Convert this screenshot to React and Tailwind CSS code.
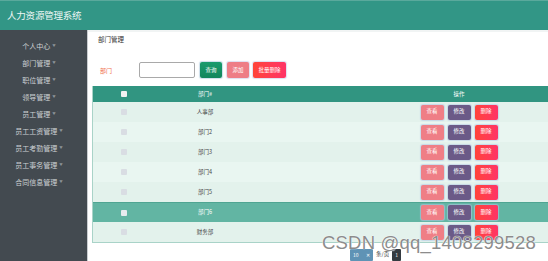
import React from 'react';

// sidebar menu
const menuItems = [
  '个人中心',
  '部门管理',
  '职位管理',
  '领导管理',
  '员工管理',
  '员工工资管理',
  '员工考勤管理',
  '员工事务管理',
  '合同信息管理',
];

const departments = [
  { name: '人事部' },
  { name: '部门2' },
  { name: '部门3' },
  { name: '部门4' },
  { name: '部门5' },
  { name: '部门6', active: true },
  { name: '财务部' },
];

function ActionButton({ label, className }) {
  return (
    <button
      className={`w-[23px] h-[15px] flex items-center justify-center rounded-[2px] text-white text-[5.5px] leading-none shadow-[0_0_1px_1px_rgba(180,200,230,0.6)] ${className}`}
    >
      {label}
    </button>
  );
}

export default function App() {
  return (
    <div
      className="w-[548px] h-[261px] overflow-hidden flex flex-col bg-white relative"
      style={{ fontFamily: '"Noto Sans CJK SC", "Liberation Sans", sans-serif' }}
    >
      {/* header */}
      <header className="h-[30px] shrink-0 bg-[#329686] border-t border-[#5aa99c] flex items-center px-[7px]">
        <span className="text-[#eef7f5] text-[9.5px] tracking-[-0.2px]">人力资源管理系统</span>
      </header>

      <div className="flex flex-1 min-h-0">
        {/* sidebar */}
        <aside className="w-[87px] shrink-0 bg-[#434a50] pt-[8px]">
          <ul className="w-[78px] flex flex-col">
            {menuItems.map((item) => (
              <li key={item} className="h-[17px] flex items-center justify-center">
                <span className="text-[7px] text-[#cdd1d4] leading-none">{item}</span>
                <span className="text-[3.5px] text-[#8e959a] ml-[2px] -mt-[2px]">▼</span>
              </li>
            ))}
          </ul>
        </aside>
        <div className="w-px shrink-0 bg-[#c9cdd0]" />

        {/* main */}
        <main className="flex-1 min-w-0 flex flex-col">
          <div className="h-[2px] bg-[#f1f4f4]" />
          <div className="h-[20px] flex items-center pl-[10px]">
            <span className="text-[6.5px] text-[#333]">部门管理</span>
          </div>

          {/* search form */}
          <div className="mt-[13px] h-[16px] flex items-center pl-[12px]">
            <span className="w-[39px] text-[6px] text-[#f0704f]">部门</span>
            <div className="w-[56px] h-[16px] rounded-[2px] border border-[#a9a9a9] bg-white" />
            <button className="ml-[5px] w-[22px] h-[16px] rounded-[2px] bg-gradient-to-b from-[#1a9b6d] to-[#12865c] text-white text-[5.5px] shadow-[0_0_1px_1px_rgba(170,200,220,0.6)]">查询</button>
            <button className="ml-[5px] w-[22px] h-[16px] rounded-[2px] bg-[#ee7d86] text-white text-[5.5px] shadow-[0_0_1px_1px_rgba(200,200,230,0.6)]">添加</button>
            <button className="ml-[4px] w-[33px] h-[16px] rounded-[2px] bg-gradient-to-r from-[#ff4438] to-[#ff3366] text-white text-[5.5px] shadow-[0_0_1px_1px_rgba(200,200,230,0.6)]">批量删除</button>
          </div>

          {/* table */}
          <div className="mt-[8px] ml-[4px] border-l border-b border-[#a9d3c8]">
            <div className="h-[16px] grid grid-cols-[62px_100px_115px_1fr] items-center bg-[#319581] text-white text-[5.5px]">
              <div className="flex justify-center">
                <span className="w-[6px] h-[6px] bg-[#f2f2f2] rounded-[1px]" />
              </div>
              <div className="text-center">部门#</div>
              <div />
              <div className="text-center">操作</div>
            </div>
            {departments.map((d, i) => (
              <div
                key={d.name}
                className={`h-[20px] grid grid-cols-[62px_100px_115px_1fr] items-center text-[5.5px] ${
                  d.active
                    ? 'bg-[#62b5a3] text-white border-t border-[#4fa592]'
                    : i % 2 === 0
                    ? 'bg-[#e3f2ec] text-[#444]'
                    : 'bg-[#e9f6f1] text-[#444]'
                }`}
              >
                <div className="flex justify-center">
                  <span className={`w-[6px] h-[6px] rounded-[1px] ${d.active ? 'bg-[#e8ecef]' : 'bg-[#d9dde3]'}`} />
                </div>
                <div className="text-center">{d.name}</div>
                <div />
                <div className="flex justify-center gap-[4px]">
                  <ActionButton label="查看" className="bg-[#ef7e86]" />
                  <ActionButton label="修改" className="bg-[#6b5a87]" />
                  <ActionButton label="删除" className="bg-gradient-to-r from-[#ff4438] to-[#ff3366]" />
                </div>
              </div>
            ))}
          </div>

          {/* pagination */}
          <div className="mt-[6px] pl-[262px] flex items-start gap-[3px]">
            <div className="w-[23px] h-[12px] bg-[#5f93b5] rounded-[1px] flex items-center justify-between px-[3px] text-white text-[5px]">
              <span>10</span>
              <span>✕</span>
            </div>
            <span className="text-[5.5px] text-[#333] leading-[10px]">条/页</span>
            <div className="w-[9px] h-[12px] bg-[#343b41] rounded-[1px] flex items-center justify-center text-white text-[5px]">1</div>
          </div>
        </main>
      </div>

      {/* watermark */}
      <div
        className="absolute left-[322px] top-[229px] text-[18.5px] text-[#8c8c8c] tracking-[0.2px] pointer-events-none"
        style={{ fontFamily: '"Liberation Sans", Arial, sans-serif', textShadow: '0 0 1px #fff, 0 0 1px #fff' }}
      >
        CSDN @qq_1408299528
      </div>
    </div>
  );
}
